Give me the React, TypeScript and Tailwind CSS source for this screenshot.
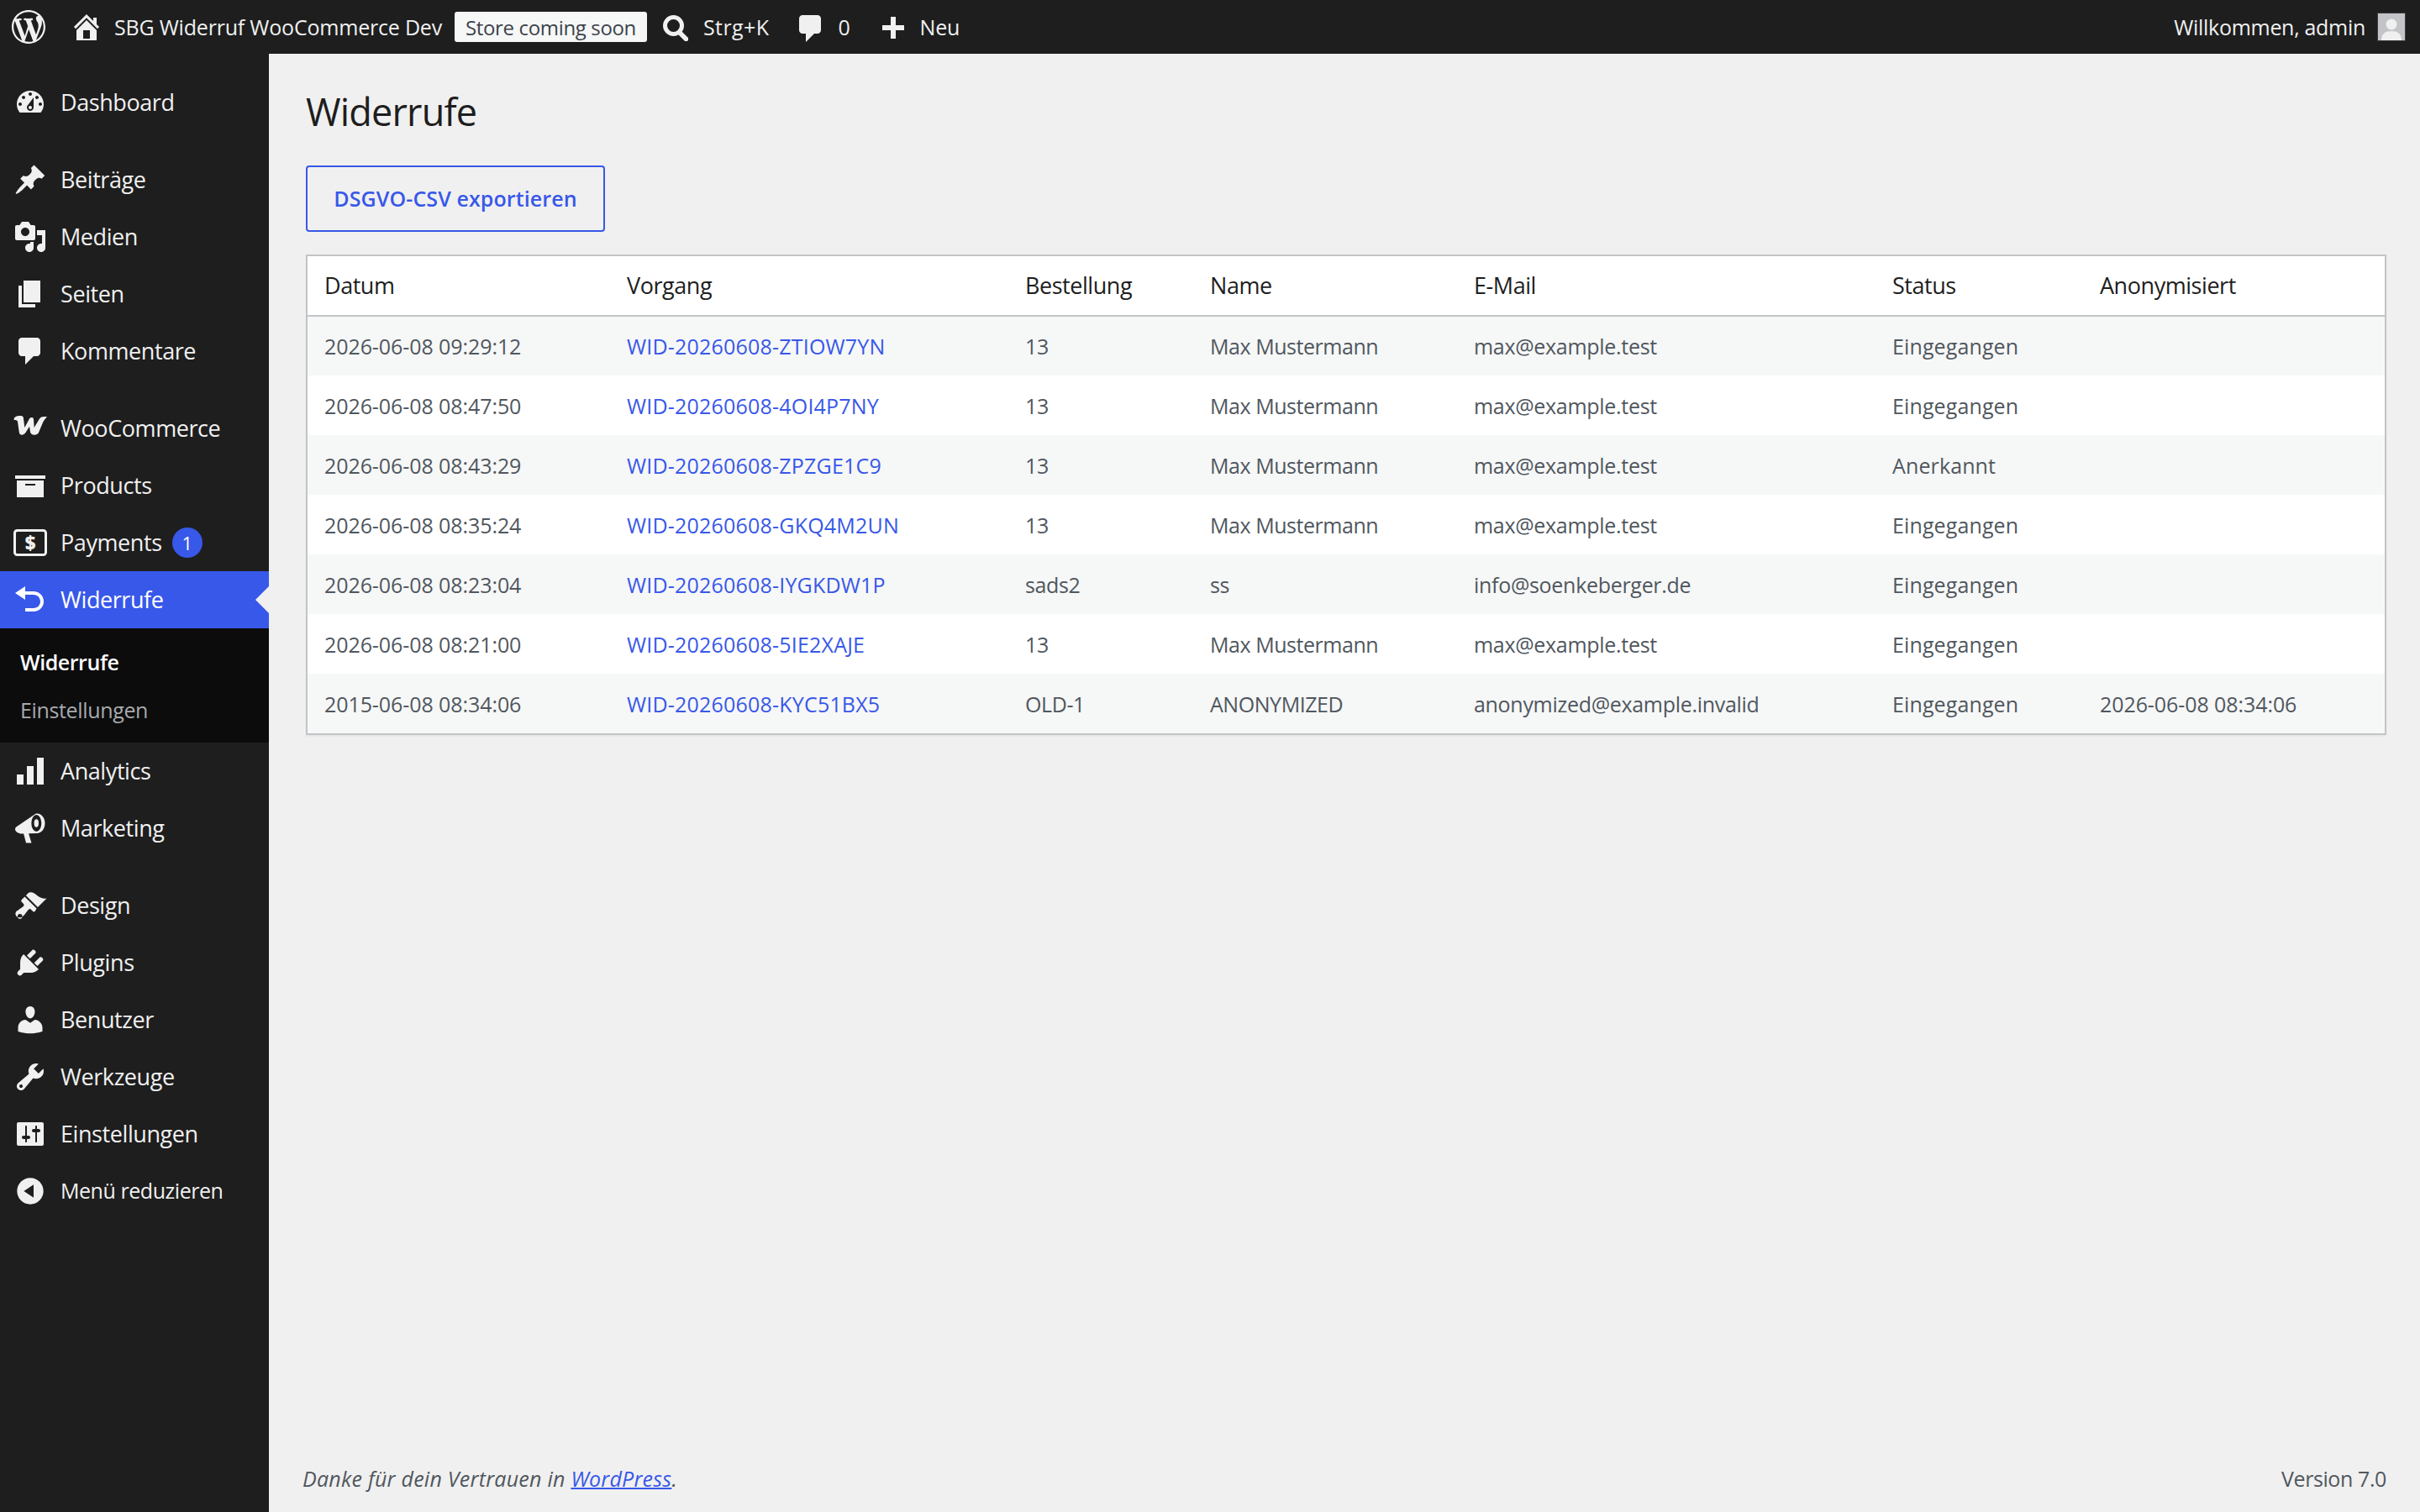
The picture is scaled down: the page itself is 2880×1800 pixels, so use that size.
import type { ReactNode } from "react";

const paths = {
  wordpress:
    "M20 10c0-5.51-4.49-10-10-10C4.48 0 0 4.49 0 10c0 5.52 4.48 10 10 10 5.51 0 10-4.48 10-10zM7.78 15.37L4.37 6.22c.55-.02 1.17-.08 1.17-.08.5-.06.44-1.13-.06-1.11 0 0-1.45.11-2.37.11-.18 0-.37 0-.58-.01C4.12 2.69 6.87 1.11 10 1.11c2.33 0 4.45.87 6.05 2.34-.68-.11-1.65.39-1.65 1.58 0 .74.45 1.36.9 2.1.35.61.55 1.36.55 2.46 0 1.49-1.4 5-1.4 5l-3.03-8.37c.54-.02.82-.17.82-.17.5-.05.44-1.25-.06-1.22 0 0-1.44.12-2.38.12-.87 0-2.33-.12-2.33-.12-.5-.03-.56 1.2-.06 1.22l.92.08 1.26 3.41zM17.41 10c.24-.64.74-1.87.43-4.25.7 1.29 1.05 2.71 1.05 4.25 0 3.29-1.73 6.24-4.4 7.78.97-2.59 1.94-5.2 2.92-7.78zM6.1 18.09C3.12 16.65 1.11 13.53 1.11 10c0-1.3.23-2.48.72-3.59C3.25 10.3 4.67 14.2 6.1 18.09zm4.03-6.63l2.58 6.98c-.86.29-1.76.45-2.71.45-.79 0-1.57-.11-2.29-.33.81-2.38 1.62-4.74 2.42-7.1z",
  home: "M16 8.5l1.53 1.53-1.06 1.06L10 4.62l-6.47 6.47-1.06-1.06L10 2.5l4 4v-2h2v4zm-6-2.46l6 5.99V18H4v-5.97zM12 17v-5H8v5h4z",
  plus: "M17 7v3h-5v5H9v-5H4V7h5V2h3v5h5z",
  dashboard:
    "M3.76 16h12.48c1.1-1.37 1.76-3.11 1.76-5 0-4.42-3.58-8-8-8s-8 3.58-8 8c0 1.89.66 3.63 1.76 5zM10 4c.55 0 1 .45 1 1s-.45 1-1 1-1-.45-1-1 .45-1 1-1zM6 6c.55 0 1 .45 1 1s-.45 1-1 1-1-.45-1-1 .45-1 1-1zm8 0c.55 0 1 .45 1 1s-.45 1-1 1-1-.45-1-1 .45-1 1-1zm-5.37 5.55L12 7v6c0 1.1-.9 2-2 2s-2-.9-2-2c0-.57.24-1.08.63-1.45zM4 10c.55 0 1 .45 1 1s-.45 1-1 1-1-.45-1-1 .45-1 1-1zm12 0c.55 0 1 .45 1 1s-.45 1-1 1-1-.45-1-1 .45-1 1-1zm-5 3c0-.55-.45-1-1-1s-1 .45-1 1 .45 1 1 1 1-.45 1-1z",
  pin: "M10.44 3.02l1.82-1.82 6.36 6.35-1.83 1.82c-1.05-.68-2.48-.57-3.41.36l-.75.75c-.92.93-1.04 2.35-.35 3.41l-1.83 1.82-2.41-2.41-2.8 2.79c-.42.42-3.38 2.71-3.8 2.29s1.86-3.39 2.28-3.81l2.79-2.79L4.1 9.36l1.83-1.82c1.05.69 2.48.57 3.41-.36l.75-.75c.93-.92 1.05-2.35.35-3.41z",
  media:
    "M13 11V4c0-.55-.45-1-1-1h-1.67L9 1H5L3.67 3H2c-.55 0-1 .45-1 1v7c0 .55.45 1 1 1h10c.55 0 1-.45 1-1zM7 4.5c1.38 0 2.5 1.12 2.5 2.5S8.38 9.5 7 9.5 4.5 8.38 4.5 7 5.62 4.5 7 4.5zM14 6h5v10.5c0 1.38-1.12 2.5-2.5 2.5S14 17.88 14 16.5s1.12-2.5 2.5-2.5c.17 0 .34.02.5.05V9h-3V6zm-4 8.05V13h2v3.5c0 1.38-1.12 2.5-2.5 2.5S7 17.88 7 16.5 8.12 14 9.5 14c.17 0 .34.02.5.05z",
  page: "M6 15V2h10v13H6zm-1 1h8v2H3V5h2v11z",
  comments:
    "M5 2h9c1.1 0 2 .9 2 2v7c0 1.1-.9 2-2 2h-2l-5 5v-5H5c-1.1 0-2-.9-2-2V4c0-1.1.9-2 2-2z",
  archive: "M19 4v2H1V4h18zM2 7h16v10H2V7zm11 3V9H7v1h6z",
  undo: "M12 5H7V2L1 6l6 4V7h5c2.2 0 4 1.8 4 4s-1.8 4-4 4H7v2h5c3.3 0 6-2.7 6-6s-2.7-6-6-6z",
  chart: "M18 18V2h-4v16h4zm-6 0V7H8v11h4zm-6 0v-6H2v6h4z",
  art: "M14.48 11.06L7.41 3.99l1.5-1.5c.5-.56 2.3-.47 3.51.32 1.21.8 1.43 1.28 2.91 2.1 1.18.64 2.45 1.26 4.45.85zm-.71.71L6.7 4.7 4.93 6.47c-.39.39-.39 1.02 0 1.41l1.06 1.06c.39.39.39 1.03 0 1.42-.6.6-1.43 1.11-2.21 1.69-.35.26-.7.53-1.01.84C1.43 13.23.99 14.52 1.3 15.5c.11.39.31.72.57.98.27.27.6.47.98.58 1 .28 2.28-.15 3.63-1.49.31-.31.58-.66.84-1.01.58-.78 1.09-1.61 1.69-2.21.39-.39 1.02-.39 1.41 0l1.06 1.06c.39.39 1.02.39 1.41 0zm-9.9 6.13c-.79 0-1.43-.64-1.43-1.43s.64-1.43 1.43-1.43 1.43.64 1.43 1.43-.64 1.43-1.43 1.43z",
  plugin:
    "M13.11 4.36L9.87 7.6 8 5.73l3.24-3.24c.35-.34 1.05-.2 1.56.32.52.51.66 1.21.31 1.55zm-8 1.77l.91-1.12 9.01 9.01-1.19.84c-.71.71-2.63 1.16-3.82 1.16H6.14L4.9 17.26c-.59.59-1.54.59-2.12 0-.59-.58-.59-1.53 0-2.12l1.24-1.24v-3.88c0-1.13.4-3.19 1.09-3.89zm7.26 3.97l3.24-3.24c.34-.35 1.04-.21 1.55.31.52.51.66 1.21.31 1.55l-3.24 3.25z",
  users:
    "M10 9.25c-2.27 0-2.73-3.44-2.73-3.44C7 4.02 7.82 2 9.97 2c2.16 0 2.98 2.02 2.71 3.81 0 0-.41 3.44-2.68 3.44zm0 2.57L12.72 10c2.39 0 4.52 2.33 4.52 4.53v2.49s-3.65 1.13-7.24 1.13c-3.65 0-7.24-1.13-7.24-1.13v-2.49c0-2.25 1.94-4.48 4.47-4.48z",
  tools:
    "M16.68 9.77c-1.34 1.34-3.3 1.67-4.95.99l-5.41 6.52c-.99.99-2.59.99-3.58 0s-.99-2.59 0-3.57l6.52-5.42c-.68-1.65-.35-3.61.99-4.95 1.28-1.28 3.12-1.62 4.72-1.06l-2.89 2.89 2.82 2.82 2.86-2.87c.53 1.58.18 3.39-1.08 4.65zM3.81 16.21c.4.39 1.04.39 1.43 0 .4-.4.4-1.04 0-1.43-.39-.4-1.03-.4-1.43 0-.39.39-.39 1.03 0 1.43z",
  settings:
    "M18 16V4c0-.55-.45-1-1-1H3c-.55 0-1 .45-1 1v12c0 .55.45 1 1 1h14c.55 0 1-.45 1-1zM8 11h1c.55 0 1 .45 1 1s-.45 1-1 1H8v1.5c0 .28-.22.5-.5.5s-.5-.22-.5-.5V13H6c-.55 0-1-.45-1-1s.45-1 1-1h1V5.5c0-.28.22-.5.5-.5s.5.22.5.5V11zm5-2h-1c-.55 0-1-.45-1-1s.45-1 1-1h1V5.5c0-.28.22-.5.5-.5s.5.22.5.5V7h1c.55 0 1 .45 1 1s-.45 1-1 1h-1v5.5c0 .28-.22.5-.5.5s-.5-.22-.5-.5V9z",
  collapse:
    "M10 2.16c4.33 0 7.84 3.51 7.84 7.84s-3.51 7.84-7.84 7.84S2.16 14.33 2.16 10 5.71 2.16 10 2.16zm2 11.72V6.12L6.18 9.97z",
};

function Dashicon({ name, className }: { name: keyof typeof paths; className?: string }) {
  return (
    <svg viewBox="0 0 20 20" className={className ?? "size-10 shrink-0"} fill="currentColor">
      <path fillRule="evenodd" d={paths[name]} />
    </svg>
  );
}

function WooIcon() {
  return (
    <svg viewBox="0 0 40 40" className="size-10 shrink-0" fill="currentColor">
      <path d="M.7 8C2 5.5 5 5 9 5c2 0 3 1.5 3 3.5L13.3 19l5.7-10.5c.5-1 1.5-1.5 3-1.5s2 1 2 2.500L24.700 19 31 8.500C32 6.800 34 6 36 6h4c-2 2-4 5-5 7l-5 12c-1 2-3 2.700-5 2.700-3 0-4.500-1.200-5-3.700l-1-6.300L14.500 25c-1.500 2-3 2.700-4.500 2.700-2 0-3-1.200-3.300-3.700L5 12c-.2-1.500-1.500-2-4.300-2z" />
    </svg>
  );
}

function MegaphoneIcon() {
  return (
    <svg viewBox="0 0 40 40" className="size-10 shrink-0" fill="currentColor">
      <path d="M4 18L26 3c6-2 11.500 4 11.500 11S33 26 28 26l-18 .5c-4 0-8-2.500-8-5.500 0-1.500 1-2.300 2-3z" />
      <path d="M12 26l3 11.500h6.500L18 26z" />
      <ellipse cx="27.300" cy="14" rx="6" ry="10" fill="#1e1e1e" />
      <ellipse cx="27.300" cy="14" rx="2.700" ry="4.700" />
    </svg>
  );
}

function PaymentsIcon() {
  return (
    <svg viewBox="0 0 40 40" className="size-10 shrink-0">
      <rect x="1.5" y="5.5" width="37" height="29" rx="3" fill="none" stroke="currentColor" strokeWidth="3" />
      <text x="20" y="28.5" textAnchor="middle" fontSize="22" fontWeight="800" fill="currentColor" fontFamily="'Open Sans', sans-serif">
        $
      </text>
    </svg>
  );
}

function MenuItem({ icon, label, children, small }: { icon: ReactNode; label: string; children?: ReactNode; small?: boolean }) {
  return (
    <li className={`flex h-[68px] items-center pl-4 text-[#f0f0f0] ${small ? "text-[25px] tracking-[-0.45px]" : "text-[27px] tracking-[-0.42px]"}`}>
      {icon}
      <span className="ml-4">{label}</span>
      {children}
    </li>
  );
}

const rows = [
  ["2026-06-08 09:29:12", "WID-20260608-ZTIOW7YN", "13", "Max Mustermann", "max@example.test", "Eingegangen", ""],
  ["2026-06-08 08:47:50", "WID-20260608-4OI4P7NY", "13", "Max Mustermann", "max@example.test", "Eingegangen", ""],
  ["2026-06-08 08:43:29", "WID-20260608-ZPZGE1C9", "13", "Max Mustermann", "max@example.test", "Anerkannt", ""],
  ["2026-06-08 08:35:24", "WID-20260608-GKQ4M2UN", "13", "Max Mustermann", "max@example.test", "Eingegangen", ""],
  ["2026-06-08 08:23:04", "WID-20260608-IYGKDW1P", "sads2", "ss", "info@soenkeberger.de", "Eingegangen", ""],
  ["2026-06-08 08:21:00", "WID-20260608-5IE2XAJE", "13", "Max Mustermann", "max@example.test", "Eingegangen", ""],
  ["2015-06-08 08:34:06", "WID-20260608-KYC51BX5", "OLD-1", "ANONYMIZED", "anonymized@example.invalid", "Eingegangen", "2026-06-08 08:34:06"],
];

export default function App() {
  return (
    <div className="flex h-[1800px] flex-col overflow-hidden bg-[#f0f0f0] font-['Open_Sans','Noto_Sans',sans-serif]">
      {/* admin bar */}
      <header className="flex h-16 shrink-0 items-center bg-[#1e1e1e] pr-[18px] text-[25px] tracking-[-0.2px] text-[#f0f0f0]">
        <Dashicon name="wordpress" className="ml-[14px] size-10 shrink-0" />
        <Dashicon name="home" className="ml-[29px] size-10 shrink-0" />
        <span className="ml-[13px] pt-0.5">SBG Widerruf WooCommerce Dev</span>
        <span className="ml-[15px] flex h-9 w-[229px] items-center justify-center rounded-[3px] bg-[#f6f7f7] pt-0.5 text-[24px] tracking-[-0.35px] text-[#3c434a]">
          Store coming soon
        </span>
        <svg viewBox="0 0 30 31" className="mt-[3px] ml-[19px] h-[31px] w-[30px] shrink-0" fill="none" stroke="currentColor">
          <circle cx="12.5" cy="12.5" r="10" strokeWidth="5" />
          <path d="M20 21l7.5 7.5" strokeWidth="5.5" strokeLinecap="round" />
        </svg>
        <span className="ml-[18px] pt-0.5 tracking-[0.4px]">Strg+K</span>
        <Dashicon name="comments" className="mt-1 ml-[30px] size-10 shrink-0" />
        <span className="ml-3 pt-0.5">0</span>
        <Dashicon name="plus" className="mt-2 ml-[30px] size-10 shrink-0" />
        <span className="ml-[13px] pt-0.5">Neu</span>
        <span className="ml-auto pt-0.5 tracking-[-0.3px]">Willkommen, admin</span>
        <div className="ml-[15px] flex size-8 items-end justify-center overflow-hidden bg-[#c3c4c7] outline-1 outline-[#3c3c3c]">
          <svg viewBox="0 0 32 32" className="size-8" fill="#f0f0f0">
            <circle cx="16" cy="13" r="6.5" />
            <path d="M4 32c0-8 5-11 12-11s12 3 12 11z" />
          </svg>
        </div>
      </header>

      <div className="flex min-h-0 flex-1">
        {/* sidebar */}
        <aside className="w-[320px] shrink-0 bg-[#1e1e1e] pt-6">
          <ul>
            <MenuItem icon={<Dashicon name="dashboard" />} label="Dashboard" />
          </ul>
          <ul className="mt-6">
            <MenuItem icon={<Dashicon name="pin" />} label="Beiträge" />
            <MenuItem icon={<Dashicon name="media" />} label="Medien" />
            <MenuItem icon={<Dashicon name="page" />} label="Seiten" />
            <MenuItem icon={<Dashicon name="comments" />} label="Kommentare" />
          </ul>
          <ul className="mt-6">
            <MenuItem icon={<WooIcon />} label="WooCommerce" />
            <MenuItem icon={<Dashicon name="archive" />} label="Products" />
            <MenuItem icon={<PaymentsIcon />} label="Payments">
              <span className="ml-3 flex size-9 items-center justify-center rounded-full bg-[#3858e9] text-[22px] text-white">1</span>
            </MenuItem>
            <li className="relative flex h-[68px] items-center bg-[#3858e9] pl-4 text-[27px] tracking-[-0.42px] text-white">
              <Dashicon name="undo" />
              <span className="ml-4">Widerrufe</span>
              <span className="absolute top-1/2 right-0 -translate-y-1/2 border-y-[16px] border-r-[16px] border-y-transparent border-r-[#f0f0f0]" />
            </li>
            <li className="flex h-[136px] flex-col bg-[#0c0c0c] pt-3 pl-6 text-[25px]">
              <span className="flex h-[57px] items-center font-semibold tracking-[-0.45px] text-white">Widerrufe</span>
              <span className="flex h-[57px] items-center tracking-[-0.35px] text-[#a7aaad]">Einstellungen</span>
            </li>
            <MenuItem icon={<Dashicon name="chart" />} label="Analytics" />
            <MenuItem icon={<MegaphoneIcon />} label="Marketing" />
          </ul>
          <ul className="mt-6">
            <MenuItem icon={<Dashicon name="art" />} label="Design" />
            <MenuItem icon={<Dashicon name="plugin" />} label="Plugins" />
            <MenuItem icon={<Dashicon name="users" />} label="Benutzer" />
            <MenuItem icon={<Dashicon name="tools" />} label="Werkzeuge" />
            <MenuItem icon={<Dashicon name="settings" />} label="Einstellungen" />
            <MenuItem icon={<Dashicon name="collapse" />} label="Menü reduzieren" small />
          </ul>
        </aside>

        {/* content */}
        <main className="flex min-w-0 flex-1 flex-col pr-10 pl-10">
          <div className="pl-1">
            <h1 className="mt-[38px] text-[45px] leading-[62px] font-normal tracking-[-0.8px] text-[#1e1e1e]">Widerrufe</h1>
            <button className="mt-[33px] flex h-[79px] w-[356px] items-center justify-center rounded-[4px] border-2 border-[#3858e9] text-[25px] font-semibold tracking-[0.1px] text-[#3858e9]">
              DSGVO-CSV exportieren
            </button>
            <div className="mt-[27px] border-2 border-[#c3c4c7] bg-white shadow-[0_2px_2px_rgba(0,0,0,0.04)]">
              <table className="w-full table-fixed border-collapse text-left">
                <thead>
                  <tr className="h-[71px] border-b-2 border-[#c3c4c7] text-[27px] tracking-[-0.45px] text-[#1e1e1e]">
                    <th className="w-[360px] pl-5 font-normal">Datum</th>
                    <th className="w-[474px] pl-5 font-normal">Vorgang</th>
                    <th className="w-[220px] pl-5 font-normal">Bestellung</th>
                    <th className="w-[314px] pl-5 font-normal">Name</th>
                    <th className="w-[498px] pl-5 font-normal">E-Mail</th>
                    <th className="w-[247px] pl-5 font-normal">Status</th>
                    <th className="pl-5 font-normal">Anonymisiert</th>
                  </tr>
                </thead>
                <tbody className="text-[25px] text-[#50575e]">
                  {rows.map((r, i) => (
                    <tr key={r[1]} className={`h-[71px] ${i % 2 === 0 ? "bg-[#f6f7f7]" : "bg-white"}`}>
                      <td className="pt-0.5 pl-5 tracking-[-0.08px]">{r[0]}</td>
                      <td className="pt-0.5 pl-5 tracking-[0.2px] text-[#3858e9]">{r[1]}</td>
                      <td className="pt-0.5 pl-5 tracking-[-0.4px]">{r[2]}</td>
                      <td className="pt-0.5 pl-5 tracking-[-0.45px]">{r[3]}</td>
                      <td className="pt-0.5 pl-5 tracking-[-0.3px]">{r[4]}</td>
                      <td className="pt-0.5 pl-5 tracking-[0.12px]">{r[5]}</td>
                      <td className="pt-0.5 pl-5 tracking-[-0.08px]">{r[6]}</td>
                    </tr>
                  ))}
                </tbody>
              </table>
            </div>
          </div>

          <footer className="mt-auto flex h-20 items-center justify-between pt-0.5 text-[25px] text-[#50575e]">
            <p className="tracking-[0.25px] italic">
              Danke für dein Vertrauen in <a className="text-[#3858e9] underline decoration-2">WordPress</a>.
            </p>
            <p className="tracking-[-0.4px]">Version 7.0</p>
          </footer>
        </main>
      </div>
    </div>
  );
}
